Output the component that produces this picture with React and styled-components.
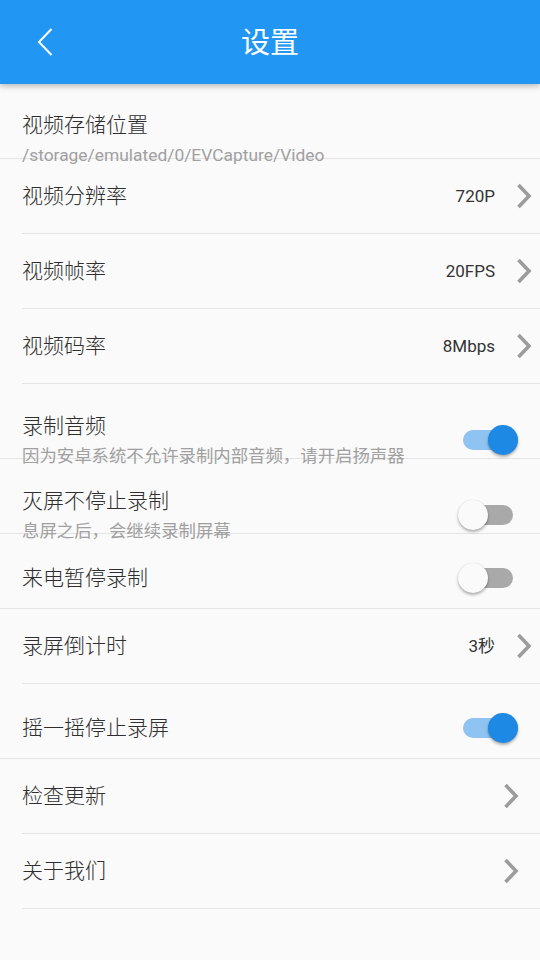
import React from "react";
import styled, { createGlobalStyle } from "styled-components";

const GlobalStyle = createGlobalStyle`
  html, body {
    margin: 0;
    padding: 0;
    background: #fafafa;
  }
  body {
    font-family: Roboto, "Noto Sans CJK SC", sans-serif;
    -webkit-font-smoothing: antialiased;
  }
`;

const Page = styled.div`
  width: 540px;
  min-height: 960px;
  background: #fafafa;
  display: flex;
  flex-direction: column;
`;

const Header = styled.header`
  position: relative;
  z-index: 2;
  height: 84px;
  flex: 0 0 84px;
  background: #2196f3;
  box-shadow: 0 2px 6px rgba(0, 0, 0, 0.28);
  display: grid;
  grid-template-columns: 84px 1fr 84px;
  align-items: center;
`;

const BackButton = styled.button`
  border: 0;
  background: transparent;
  padding: 0 0 0 37px;
  height: 84px;
  display: flex;
  align-items: center;
  cursor: pointer;
`;

const Title = styled.h1`
  margin: 0;
  text-align: center;
  color: #ffffff;
  font-family: Roboto, "Noto Sans CJK SC", sans-serif;
  font-size: 29px;
  font-weight: 400;
  line-height: 40px;
  padding-top: 2px;
`;

const List = styled.div`
  display: flex;
  flex-direction: column;
`;

const Row = styled.div`
  box-sizing: border-box;
  height: 75px;
  display: flex;
  align-items: center;
  border-bottom: 1px solid #e4e4e4;
  margin-left: ${(p) => (p.$full ? 0 : 22)}px;
  padding-left: ${(p) => (p.$full ? 22 : 0)}px;
  padding-right: ${(p) => p.$right}px;
  padding-top: ${(p) => p.$shift}px;
`;

const TextBlock = styled.div`
  flex: 1;
  min-width: 0;
  display: flex;
  flex-direction: column;
`;

const RowTitle = styled.div`
  font-size: 21px;
  font-weight: 300;
  line-height: 26px;
  color: #2e2e2e;
  white-space: nowrap;
`;

const RowSub = styled.div`
  margin-top: 7px;
  font-size: 17.4px;
  font-weight: 400;
  line-height: 20px;
  color: #a0a0a0;
  white-space: nowrap;
`;

const Value = styled.span`
  font-size: 17px;
  line-height: 24px;
  color: #333333;
  margin-right: 21px;
`;

const ChevronIcon = styled.svg`
  display: block;
  flex: 0 0 auto;
`;

const SwitchTrack = styled.div`
  position: relative;
  width: 50px;
  height: 20px;
  border-radius: 10px;
  margin: 0 5px;
  background: ${(p) => (p.$on ? "#8ec3f2" : "#a9a9a9")};
  flex: 0 0 auto;
`;

const SwitchThumb = styled.div`
  position: absolute;
  top: -5px;
  left: ${(p) => (p.$on ? 25 : -5)}px;
  width: 30px;
  height: 30px;
  border-radius: 50%;
  background: ${(p) => (p.$on ? "#1e88e5" : "#fafafa")};
  box-shadow: 0 2px 3px rgba(0, 0, 0, 0.3), 0 0 1px rgba(0, 0, 0, 0.15);
`;

const Chevron = () => (
  <ChevronIcon width="16" height="26" viewBox="0 0 16 26">
    <polyline
      points="2.5,2 13,13 2.5,24"
      fill="none"
      stroke="#9c9c9c"
      strokeWidth="3.6"
      strokeLinejoin="miter"
      strokeLinecap="butt"
    />
  </ChevronIcon>
);

const BackArrow = () => (
  <svg width="16" height="28" viewBox="0 0 16 28">
    <polyline
      points="14.5,1 2,14 14.5,27"
      fill="none"
      stroke="#ffffff"
      strokeWidth="2"
      strokeLinejoin="miter"
    />
  </svg>
);

const Switch = ({ on }) => (
  <SwitchTrack $on={on}>
    <SwitchThumb $on={on} />
  </SwitchTrack>
);

const rows = [
  { title: "视频存储位置", sub: "/storage/emulated/0/EVCapture/Video", full: true, shift: 35 },
  { title: "视频分辨率", value: "720P", chevron: true },
  { title: "视频帧率", value: "20FPS", chevron: true },
  { title: "视频码率", value: "8Mbps", chevron: true },
  { title: "录制音频", sub: "因为安卓系统不允许录制内部音频，请开启扬声器", toggle: true, on: true, full: true, shift: 37 },
  { title: "灭屏不停止录制", sub: "息屏之后，会继续录制屏幕", toggle: true, on: false, full: true, shift: 37 },
  { title: "来电暂停录制", toggle: true, on: false, full: true, shift: 14 },
  { title: "录屏倒计时", value: "3秒", chevron: true },
  { title: "摇一摇停止录屏", toggle: true, on: true, full: true, shift: 14 },
  { title: "检查更新", chevron: true },
  { title: "关于我们", chevron: true },
];

export default function App() {
  return (
    <>
      <GlobalStyle />
      <Page>
        <Header>
          <BackButton aria-label="返回">
            <BackArrow />
          </BackButton>
          <Title>设置</Title>
          <span />
        </Header>
        <List>
          {rows.map((r) => {
            const right = r.toggle ? 22 : r.value ? 8 : r.chevron ? 21 : 22;
            return (
              <Row key={r.title} $full={!!r.full} $right={right} $shift={r.shift || 0}>
                <TextBlock>
                  <RowTitle>{r.title}</RowTitle>
                  {r.sub && <RowSub>{r.sub}</RowSub>}
                </TextBlock>
                {r.value && <Value>{r.value}</Value>}
                {r.chevron && <Chevron />}
                {r.toggle && <Switch on={r.on} />}
              </Row>
            );
          })}
        </List>
      </Page>
    </>
  );
}
